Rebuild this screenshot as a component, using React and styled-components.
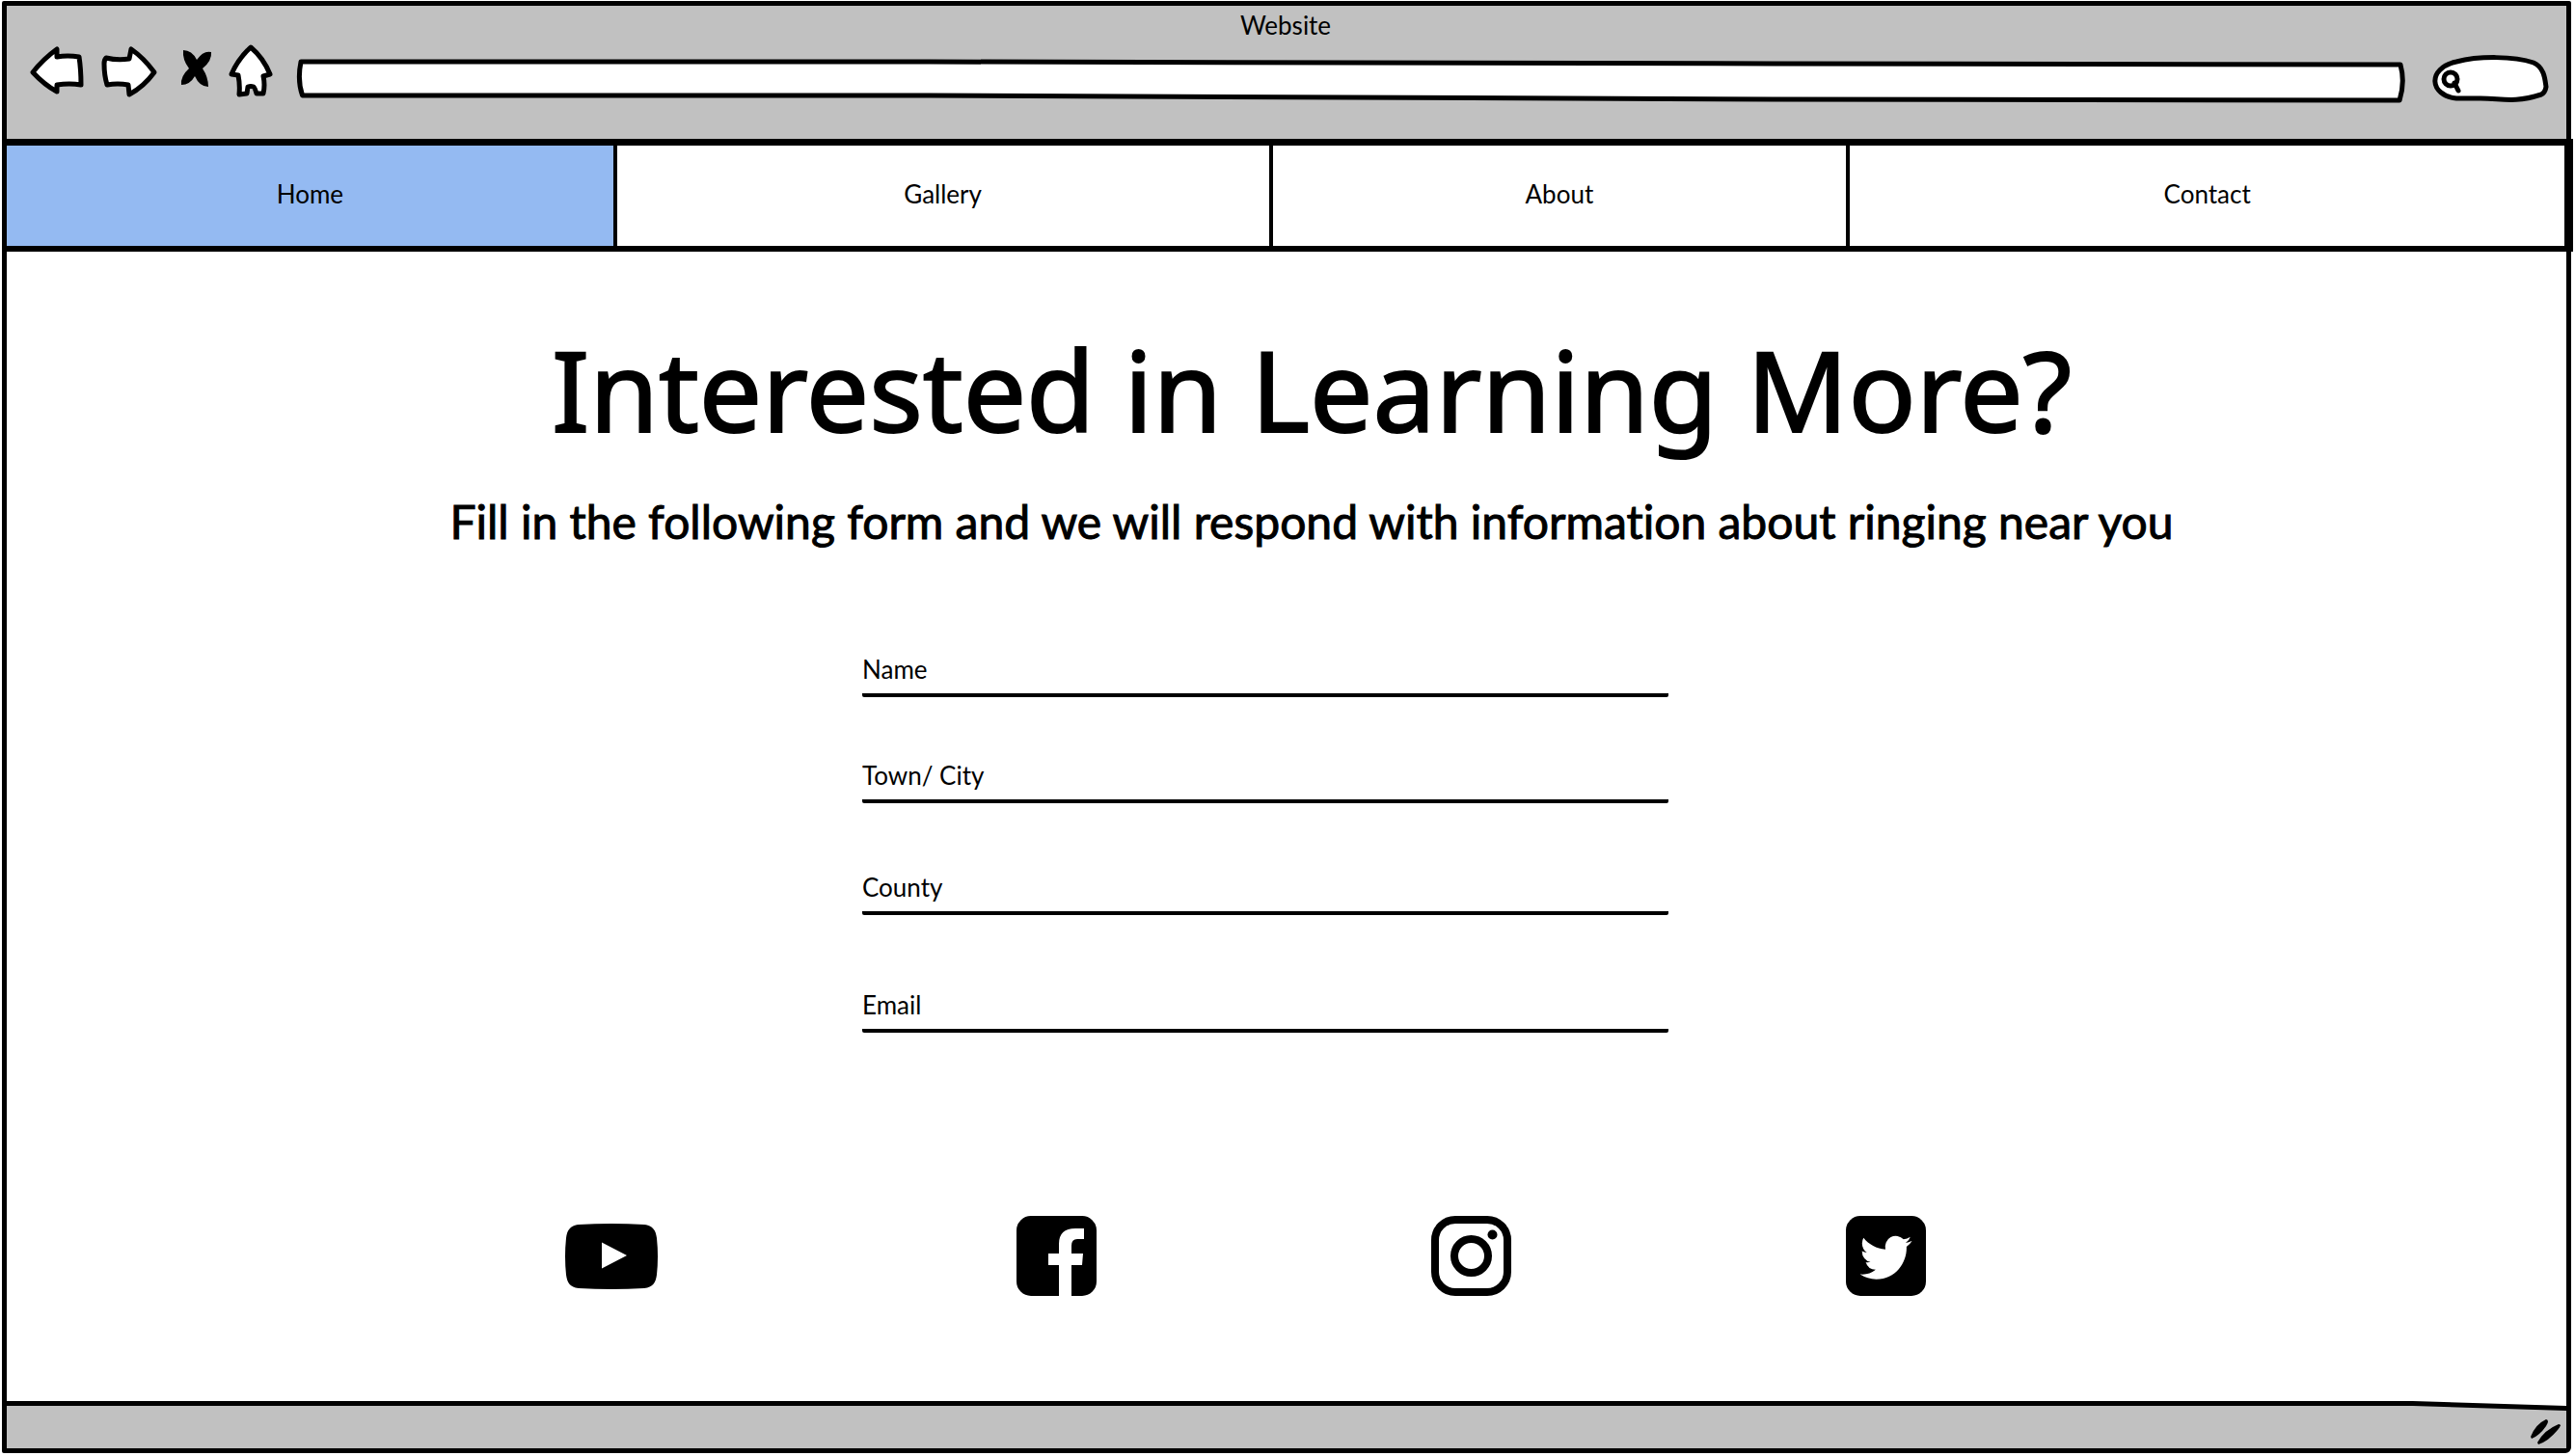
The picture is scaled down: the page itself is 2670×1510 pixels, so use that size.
import React from "react";
import styled, { createGlobalStyle } from "styled-components";

const ink = "#000";
const chrome = "#c1c1c1";
const active = "#94baf2";
const sans = `Lato, "Noto Sans", sans-serif`;

const GlobalStyle = createGlobalStyle`
  *, *::before, *::after { box-sizing: border-box; }
  body {
    margin: 0;
    background: #fff;
    color: ${ink};
    font-family: ${sans};
    font-size: 26px;
    line-height: 32px;
    font-variant-ligatures: none;
  }
`;

const Page = styled.div`
  min-height: 100vh;
  display: flex;
  flex-direction: column;
  padding: 1px 4px 3px 2px;
`;

const Frame = styled.div`
  flex: 1;
  display: flex;
  flex-direction: column;
  border: 5px solid ${ink};
  border-radius: 2px 2px 6px 2px;
`;

const Header = styled.header`
  background: ${chrome};
  padding: 4px 18px 37px 24px;
`;

const WindowTitle = styled.div`
  padding-right: 8px;
  text-align: center;
`;

const Toolbar = styled.div`
  display: flex;
  align-items: flex-start;
  gap: 23px;
  padding-top: 4px;
`;

const ToolButtons = styled.div`
  display: flex;
  gap: 17px;
`;

const ToolButton = styled.button`
  display: block;
  padding: 0;
  border: 0;
  background: none;
  cursor: pointer;
`;

const ToolIcon = styled.svg`
  display: block;
  height: 56px;
  fill: #fff;
  stroke: ${ink};
  stroke-width: 5px;
  stroke-linejoin: round;
  stroke-linecap: round;
`;

const Boxes = styled.div`
  flex: 1;
  display: flex;
  align-items: flex-end;
  gap: 28px;
  padding-top: 11px;
`;

const SketchBox = styled.div`
  position: relative;
  flex: ${(p) => (p.$grow ? "1" : "0 0 121px")};
  height: ${(p) => (p.$grow ? 46 : 50)}px;
`;

const SketchShape = styled.svg`
  position: absolute;
  inset: 0;
  width: 100%;
  height: 100%;
  fill: #fff;
  stroke: ${ink};
  stroke-width: 5px;
  stroke-linejoin: round;
  stroke-linecap: round;
  path, circle { vector-effect: non-scaling-stroke; }
`;

const SketchInput = styled.input`
  position: relative;
  width: 100%;
  height: 100%;
  padding: 0 12px 0 ${(p) => (p.$inset ? 34 : 12)}px;
  border: 0;
  outline: 0;
  background: transparent;
  font: inherit;
  appearance: none;
`;

const Nav = styled.nav`
  display: grid;
  grid-template-columns: 633fr 680fr 599fr 741fr;
  margin-right: -7px;
  border: solid ${ink};
  border-width: 7px 9px 6px 0;
`;

const NavLink = styled.a`
  display: flex;
  align-items: center;
  justify-content: center;
  height: 104px;
  padding-bottom: 4px;
  background: ${(p) => (p.$active ? active : "#fff")};
  border-right: 4px solid ${ink};
  color: inherit;
  text-decoration: none;
  &:last-child { border-right: 0; }
`;

const Main = styled.main`
  flex: 1;
  display: flex;
  flex-direction: column;
  align-items: center;
  padding: 82px 24px 64px;
`;

const Intro = styled.div`
  padding-left: 52px;
  text-align: center;
`;

const Heading = styled.h1`
  margin: 0;
  font-family: "Noto Sans", sans-serif;
  font-weight: 400;
  font-size: 116px;
  line-height: 120px;
  -webkit-text-stroke: 2px ${ink};
`;

const Lead = styled.p`
  margin: 50px 0 0;
  font-size: 48px;
  line-height: 56px;
  -webkit-text-stroke: 1px ${ink};
`;

const FormArea = styled.form`
  width: 100%;
  max-width: 880px;
  padding-right: 44px;
  margin-top: 109px;
`;

const Field = styled.div`
  display: flex;
  gap: 12px;
  margin-top: ${(p) => p.$gap}px;
  padding-bottom: 9px;
  border-bottom: 4px solid ${ink};
  border-radius: 2px;
`;

const FieldInput = styled.input`
  flex: 1;
  min-width: 0;
  padding: 0;
  border: 0;
  outline: 0;
  background: transparent;
  font: inherit;
`;

const Socials = styled.div`
  width: 100%;
  max-width: 1496px;
  padding-right: 85px;
  margin-top: 190px;
  display: grid;
  grid-template-columns: 468fr 430fr 430fr 83fr;
  align-items: center;
`;

const SocialLink = styled.a`
  display: block;
  color: ${ink};
`;

const SocialIcon = styled.svg`
  display: block;
  fill: currentColor;
`;

const StatusBar = styled.footer`
  background: ${ink};
  padding-top: 5px;
  clip-path: polygon(0 0, 94% 0, 100% 5px, 100% 100%, 0 100%);
`;

const StatusInner = styled.div`
  display: flex;
  justify-content: flex-end;
  padding: 14px 5px 4px;
  background: ${chrome};
  clip-path: polygon(0 0, 94% 0, 100% 5px, 100% 100%, 0 100%);
`;

const links = ["Home", "Gallery", "About", "Contact"];

const fields = [
  { id: "name", label: "Name", type: "text", gap: 0 },
  { id: "town", label: "Town/ City", type: "text", gap: 65 },
  { id: "county", label: "County", type: "text", gap: 71 },
  { id: "email", label: "Email", type: "email", gap: 77 },
];

const tools = [
  { name: "Back", box: "31 46 57 56", w: 57,
    shape: <path d="M34 75 Q45 61 59 51 L59 59 Q70 57 82 59 Q84 72 84 88 Q72 86 59 88 L59 95 Q46 88 34 75Z" /> },
  { name: "Forward", box: "105 46 59 56", w: 59,
    shape: <path d="M160 75 Q149 60 136 51 L134 61 Q122 63 110 60 Q108 62 108 66 Q108 78 111 88 Q122 86 133 88 L134 98 Q149 90 160 75Z" /> },
  { name: "Stop", box: "181 46 39 56", w: 39,
    shape: <path fill="#000" stroke="none" d="M190 52 Q199 52 204 62 Q211 52 219 54 Q220 63 210 71 Q216 80 216 90 Q207 90 202 79 Q197 88 188 88 Q187 79 196 71 Q189 62 190 52Z" /> },
  { name: "Home page", box: "237 46 47 56", w: 47,
    shape: <path d="M260 49 Q273 60 280 77 L273 79 Q275 88 273 97 L266 97 Q264 90 263 90 Q260 89 257 90 L256 97 L248 98 Q249 88 247 78 L240 77 Q247 61 260 49Z" /> },
];

function Youtube() {
  return (
    <SocialIcon width="96" height="68" viewBox="0 0 96 68" aria-hidden="true">
      <path fillRule="evenodd" d="M14 1 Q48 -1 82 1 C91 2 94 7 95 15 Q97 34 95 53 C94 61 91 66 82 67 Q48 69 14 67 C5 66 2 61 1 53 Q-1 34 1 15 C2 7 5 2 14 1Z M38 19.500 L64 33 L38 46.500Z" />
    </SocialIcon>
  );
}

function Facebook() {
  return (
    <SocialIcon width="83" height="83" viewBox="0 0 83 83" aria-hidden="true">
      <path d="M15 0 H68 A15 15 0 0 1 83 15 V68 A15 15 0 0 1 68 83 H57 V51 H68 L69 39 H57 V31 Q57 24 63 24 H70 V13 H61 Q44 13 44 29 V39 H33 V51 H44 V83 H15 A15 15 0 0 1 0 68 V15 A15 15 0 0 1 15 0Z" />
    </SocialIcon>
  );
}

function Instagram() {
  return (
    <SocialIcon width="83" height="83" viewBox="0 0 83 83" aria-hidden="true">
      <rect x="4" y="4" width="75" height="75" rx="21" fill="none" stroke="currentColor" strokeWidth="8" />
      <circle cx="41.500" cy="41.500" r="17.500" fill="none" stroke="currentColor" strokeWidth="8" />
      <circle cx="63.500" cy="19.500" r="5" />
    </SocialIcon>
  );
}

function Twitter() {
  return (
    <SocialIcon width="83" height="83" viewBox="0 0 83 83" aria-hidden="true">
      <rect width="83" height="83" rx="15" />
      <path
        fill="#fff"
        transform="translate(14.600 15.600) scale(2.240 2.300)"
        d="M23.953 4.57a10 10 0 01-2.825.775 4.958 4.958 0 002.163-2.723c-.951.555-2.005.959-3.127 1.184a4.92 4.92 0 00-8.384 4.482C7.69 8.095 4.067 6.13 1.64 3.162a4.822 4.822 0 00-.666 2.475c0 1.71.87 3.213 2.188 4.096a4.904 4.904 0 01-2.228-.616v.06a4.923 4.923 0 003.946 4.827 4.996 4.996 0 01-2.212.085 4.936 4.936 0 004.604 3.417 9.867 9.867 0 01-6.102 2.105c-.39 0-.779-.023-1.17-.067a13.995 13.995 0 007.557 2.209c9.053 0 13.998-7.496 13.998-13.985 0-.21 0-.42-.015-.63A9.935 9.935 0 0024 4.59z"
      />
    </SocialIcon>
  );
}

const socials = [
  ["YouTube", Youtube],
  ["Facebook", Facebook],
  ["Instagram", Instagram],
  ["Twitter", Twitter],
];

export default function App() {
  return (
    <>
      <GlobalStyle />
      <Page>
        <Frame>
          <Header>
            <WindowTitle>Website</WindowTitle>
            <Toolbar>
              <ToolButtons>
                {tools.map((t) => (
                  <ToolButton key={t.name} type="button" aria-label={t.name}>
                    <ToolIcon width={t.w} viewBox={t.box}>{t.shape}</ToolIcon>
                  </ToolButton>
                ))}
              </ToolButtons>
              <Boxes>
                <SketchBox $grow>
                  <SketchShape viewBox="0 0 1000 46" preserveAspectRatio="none">
                    <path d="M2.300 3 L300 3 L700 5 L997.700 6 Q1000 24 997.300 43 L700 42 L300 38 L3 38 Q0.500 22 2.300 3Z" />
                  </SketchShape>
                  <SketchInput type="url" aria-label="Address" />
                </SketchBox>
                <SketchBox>
                  <SketchShape viewBox="0 0 121 50" preserveAspectRatio="none">
                    <path d="M25 45 C-3 42 -6 14 25 7 C48 1 85 1 105 8 C117 13 117 28 118 33 Q117 39 113 41 C82 51 70 44 46 45Z" />
                    <circle cx="19" cy="25" r="7" />
                    <path d="M23 29 L27 37" />
                  </SketchShape>
                  <SketchInput type="search" aria-label="Search" $inset />
                </SketchBox>
              </Boxes>
            </Toolbar>
          </Header>
          <Nav>
            {links.map((l, i) => (
              <NavLink key={l} href={"#" + l.toLowerCase()} $active={i === 0}>{l}</NavLink>
            ))}
          </Nav>
          <Main>
            <Intro>
              <Heading>Interested in Learning More?</Heading>
              <Lead>Fill in the following form and we will respond with information about ringing near you</Lead>
            </Intro>
            <FormArea>
              {fields.map((f) => (
                <Field key={f.id} $gap={f.gap}>
                  <label htmlFor={f.id}>{f.label}</label>
                  <FieldInput id={f.id} name={f.id} type={f.type} />
                </Field>
              ))}
            </FormArea>
            <Socials>
              {socials.map(([name, Icon]) => (
                <SocialLink key={name} href={"#" + name.toLowerCase()} aria-label={name}>
                  <Icon />
                </SocialLink>
              ))}
            </Socials>
          </Main>
          <StatusBar>
            <StatusInner>
              <svg width="32" height="26" viewBox="0 0 32 26" aria-hidden="true">
                <path d="M0 18 Q5 5 16 0 Q20 1 16 7 Q9 17 1 20Z" />
                <path d="M7 24 Q14 11 29 5 Q33 5 28 11 Q18 23 8 26Z" />
              </svg>
            </StatusInner>
          </StatusBar>
        </Frame>
      </Page>
    </>
  );
}
